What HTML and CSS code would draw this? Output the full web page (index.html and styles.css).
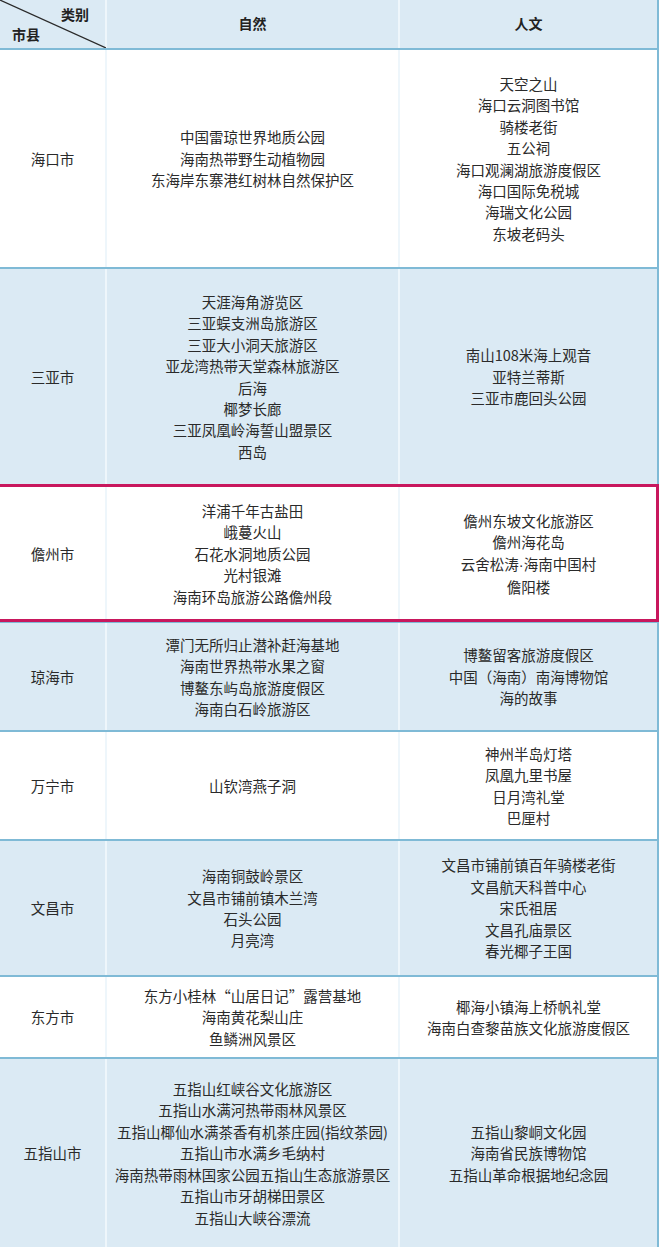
FILE: index.html
```html
<!DOCTYPE html>
<html lang="zh-CN">
<head>
<meta charset="utf-8">
<title>海南景区</title>
<link rel="stylesheet" href="styles.css">
</head>
<body>
<div class="table">
  <div class="row head">
    <div class="cell corner">
      <svg class="diag" viewBox="0 0 106 48" preserveAspectRatio="none"><line x1="0" y1="0" x2="106" y2="48" stroke="#2a2a2a" stroke-width="1.2"/></svg>
      <span class="c-top">类别</span>
      <span class="c-bot">市县</span>
    </div>
    <div class="cell th">自然</div>
    <div class="cell th">人文</div>
  </div>

  <div class="row white h1">
    <div class="cell">海口市</div>
    <div class="cell"><p>中国雷琼世界地质公园</p><p>海南热带野生动植物园</p><p>东海岸东寨港红树林自然保护区</p></div>
    <div class="cell"><p>天空之山</p><p>海口云洞图书馆</p><p>骑楼老街</p><p>五公祠</p><p>海口观澜湖旅游度假区</p><p>海口国际免税城</p><p>海瑞文化公园</p><p>东坡老码头</p></div>
  </div>

  <div class="row blue h2">
    <div class="cell">三亚市</div>
    <div class="cell"><p>天涯海角游览区</p><p>三亚蜈支洲岛旅游区</p><p>三亚大小洞天旅游区</p><p>亚龙湾热带天堂森林旅游区</p><p>后海</p><p>椰梦长廊</p><p>三亚凤凰岭海誓山盟景区</p><p>西岛</p></div>
    <div class="cell"><p>南山108米海上观音</p><p>亚特兰蒂斯</p><p>三亚市鹿回头公园</p></div>
  </div>

  <div class="row white h3 highlight">
    <div class="cell">儋州市</div>
    <div class="cell"><p>洋浦千年古盐田</p><p>峨蔓火山</p><p>石花水洞地质公园</p><p>光村银滩</p><p>海南环岛旅游公路儋州段</p></div>
    <div class="cell"><p>儋州东坡文化旅游区</p><p>儋州海花岛</p><p>云舍松涛<span class="dot">·</span>海南中国村</p><p>儋阳楼</p></div>
  </div>

  <div class="row blue h4">
    <div class="cell">琼海市</div>
    <div class="cell"><p>潭门无所归止潜补赶海基地</p><p>海南世界热带水果之窗</p><p>博鳌东屿岛旅游度假区</p><p>海南白石岭旅游区</p></div>
    <div class="cell"><p>博鳌留客旅游度假区</p><p>中国（海南）南海博物馆</p><p>海的故事</p></div>
  </div>

  <div class="row white h5">
    <div class="cell">万宁市</div>
    <div class="cell"><p>山钦湾燕子洞</p></div>
    <div class="cell"><p>神州半岛灯塔</p><p>凤凰九里书屋</p><p>日月湾礼堂</p><p>巴厘村</p></div>
  </div>

  <div class="row blue h6">
    <div class="cell">文昌市</div>
    <div class="cell"><p>海南铜鼓岭景区</p><p>文昌市铺前镇木兰湾</p><p>石头公园</p><p>月亮湾</p></div>
    <div class="cell"><p>文昌市铺前镇百年骑楼老街</p><p>文昌航天科普中心</p><p>宋氏祖居</p><p>文昌孔庙景区</p><p>春光椰子王国</p></div>
  </div>

  <div class="row white h7">
    <div class="cell">东方市</div>
    <div class="cell"><p>东方小桂林“山居日记”露营基地</p><p>海南黄花梨山庄</p><p>鱼鳞洲风景区</p></div>
    <div class="cell"><p>椰海小镇海上桥帆礼堂</p><p>海南白查黎苗族文化旅游度假区</p></div>
  </div>

  <div class="row blue h8">
    <div class="cell">五指山市</div>
    <div class="cell"><p>五指山红峡谷文化旅游区</p><p>五指山水满河热带雨林风景区</p><p>五指山椰仙水满茶香有机茶庄园(指纹茶园)</p><p>五指山市水满乡毛纳村</p><p>海南热带雨林国家公园五指山生态旅游景区</p><p>五指山市牙胡梯田景区</p><p>五指山大峡谷漂流</p></div>
    <div class="cell"><p>五指山黎峒文化园</p><p>海南省民族博物馆</p><p>五指山革命根据地纪念园</p></div>
  </div>
</div>
</body>
</html>
```

FILE: styles.css
```css
* { box-sizing: border-box; }
html, body { margin: 0; padding: 0; background: #ffffff; }
body {
  font-family: "Noto Sans CJK SC", "Noto Sans", sans-serif;
  color: #2a2a2a;
  font-size: 14.5px;
  line-height: 21.4px;
}
p { margin: 0; }

.table {
  width: 659px;
  border-right: 2px solid #7fbad6;
}

.row {
  display: grid;
  grid-template-columns: 105px 293px 1fr;
  border-top: 2px solid #7fbad6;
}
.row.head {
  border-top: none;
  height: 48px;
  background: #dbeaf4;
}
.row.blue { background: #dbeaf4; }
.row.white { background: #ffffff; }

.h1 { height: 219px; }
.h2 { height: 217px; }
.h3 { height: 137px; }
.h4 { height: 109px; }
.h5 { height: 109px; }
.h6 { height: 136px; }
.h7 { height: 82px; }
.h8 { height: 190px; }

.cell {
  display: flex;
  flex-direction: column;
  justify-content: center;
  align-items: center;
  text-align: center;
  white-space: nowrap;
}
.cell + .cell {
  border-left: 2px solid #eef6fb;
}

.dot {
  font-family: "Liberation Sans", sans-serif;
}

.th {
  font-weight: bold;
  font-size: 14px;
  color: #222;
}

.corner {
  position: relative;
  align-items: stretch;
  justify-content: flex-start;
  padding: 4px 16px 0 12px;
  font-weight: bold;
  font-size: 14px;
  line-height: 20px;
  color: #222;
}
.corner .diag {
  position: absolute;
  left: 0;
  top: 0;
  width: 106px;
  height: 48px;
}
.c-top { align-self: flex-end; }
.c-bot { align-self: flex-start; }

.highlight { position: relative; }
.highlight::after {
  content: "";
  position: absolute;
  left: 0;
  right: -2px;
  top: -2px;
  bottom: -1px;
  border: 3px solid #c8175d;
  border-left: none;
  pointer-events: none;
}
```
